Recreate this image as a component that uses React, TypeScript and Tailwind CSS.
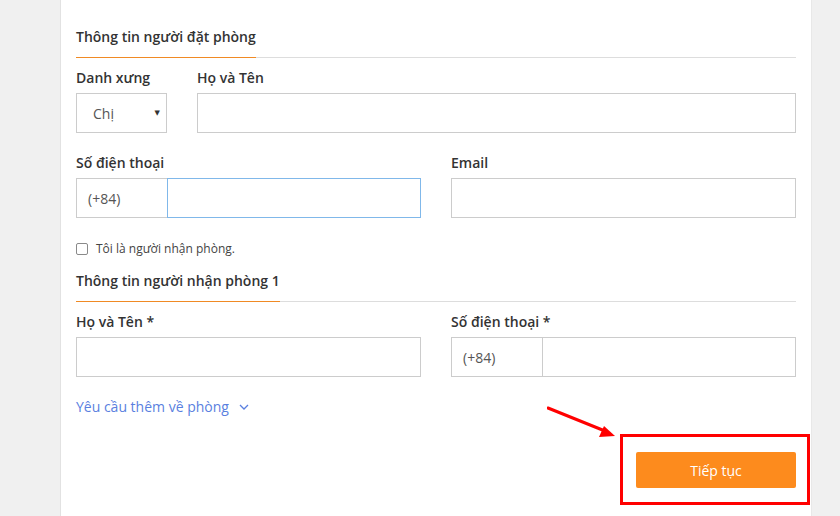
import React from "react";

function Label({ children }: { children: React.ReactNode }) {
  return <div className="text-[14px] leading-[20px] text-[#333] font-semibold">{children}</div>;
}

function SectionHeading({ children }: { children: React.ReactNode }) {
  return (
    <div className="flex items-end">
      <div className="pb-[10px] border-b border-[#f08a24] text-[14px] leading-[20px] font-semibold text-[#333]">
        {children}
      </div>
      <div className="flex-1 border-b border-[#dddddd]" />
    </div>
  );
}

export default function App() {
  return (
    <div className="w-[840px] h-[516px] flex bg-[#f0f0f0] overflow-hidden font-['Open_Sans','DejaVu_Sans',sans-serif]">
      <div className="w-[60px] shrink-0" />
      <div className="relative w-[751px] shrink-0 bg-white border-l border-[#e2e2e2] px-[15px] pt-[27px]">
        <SectionHeading>Thông tin người đặt phòng</SectionHeading>

        <div className="mt-[10px] flex gap-[30px]">
          <div className="w-[91px]">
            <Label>Danh xưng</Label>
            <div className="mt-[5px] h-[40px] border border-[#cccccc] flex items-center justify-between pl-[16px] pr-[6px]">
              <span className="text-[14px] text-[#555]">Chị</span>
              <span className="text-[7px] text-[#333]">▼</span>
            </div>
          </div>
          <div className="flex-1">
            <Label>Họ và Tên</Label>
            <div className="mt-[5px] h-[40px] border border-[#cccccc]" />
          </div>
        </div>

        <div className="mt-[20px] flex gap-[30px]">
          <div className="w-[345px]">
            <Label>Số điện thoại</Label>
            <div className="mt-[5px] h-[40px] flex">
              <div className="w-[91px] border-y border-l border-[#cccccc] flex items-center pl-[11px] text-[14px] text-[#555]">
                (+84)
              </div>
              <div className="flex-1 border border-[#80b8ea]" />
            </div>
          </div>
          <div className="flex-1">
            <Label>Email</Label>
            <div className="mt-[5px] h-[40px] border border-[#cccccc]" />
          </div>
        </div>

        <div className="mt-[25px] flex items-center h-[12px]">
          <div className="w-[12px] h-[12px] border border-[#8a8a8a] rounded-[2px] bg-white" />
          <span className="ml-[8px] text-[12px] text-[#444]">Tôi là người nhận phòng.</span>
        </div>

        <div className="mt-[16px]">
          <SectionHeading>Thông tin người nhận phòng 1</SectionHeading>
        </div>

        <div className="mt-[10px] flex gap-[30px]">
          <div className="w-[345px]">
            <Label>Họ và Tên *</Label>
            <div className="mt-[5px] h-[40px] border border-[#cccccc]" />
          </div>
          <div className="flex-1">
            <Label>Số điện thoại *</Label>
            <div className="mt-[5px] h-[40px] flex border border-[#cccccc]">
              <div className="w-[91px] border-r border-[#cccccc] flex items-center pl-[11px] text-[14px] text-[#555]">
                (+84)
              </div>
              <div className="flex-1" />
            </div>
          </div>
        </div>

        <div className="mt-[20px] flex items-center gap-[10px] text-[14px] leading-[20px] text-[#5a7fe0]">
          <span>Yêu cầu thêm về phòng</span>
          <svg width="10" height="6" viewBox="0 0 10 6" fill="none">
            <path d="M1 1l4 4 4-4" stroke="#5a7fe0" strokeWidth="1.3" />
          </svg>
        </div>

        <div className="mt-[17px] flex justify-end -mr-[14px]">
          <div className="w-[190px] border-[3px] border-[#ff0000] pl-[13px] pr-[11px] pt-[15px] pb-[14px]">
            <div className="h-[36px] rounded-[2px] bg-[#fd8b1d] flex items-center justify-center text-white text-[14px]">
              Tiếp tục
            </div>
          </div>
        </div>

        <svg className="absolute left-[486px] top-[402px]" width="72" height="38" viewBox="0 0 72 38">
          <line x1="1" y1="6" x2="58" y2="29" stroke="#ff0000" strokeWidth="3" strokeLinecap="round" />
          <polygon points="68,34 52,35 57,24" fill="#ff0000" />
        </svg>
      </div>
      <div className="flex-1 border-l border-[#e8e8e8]" />
    </div>
  );
}
